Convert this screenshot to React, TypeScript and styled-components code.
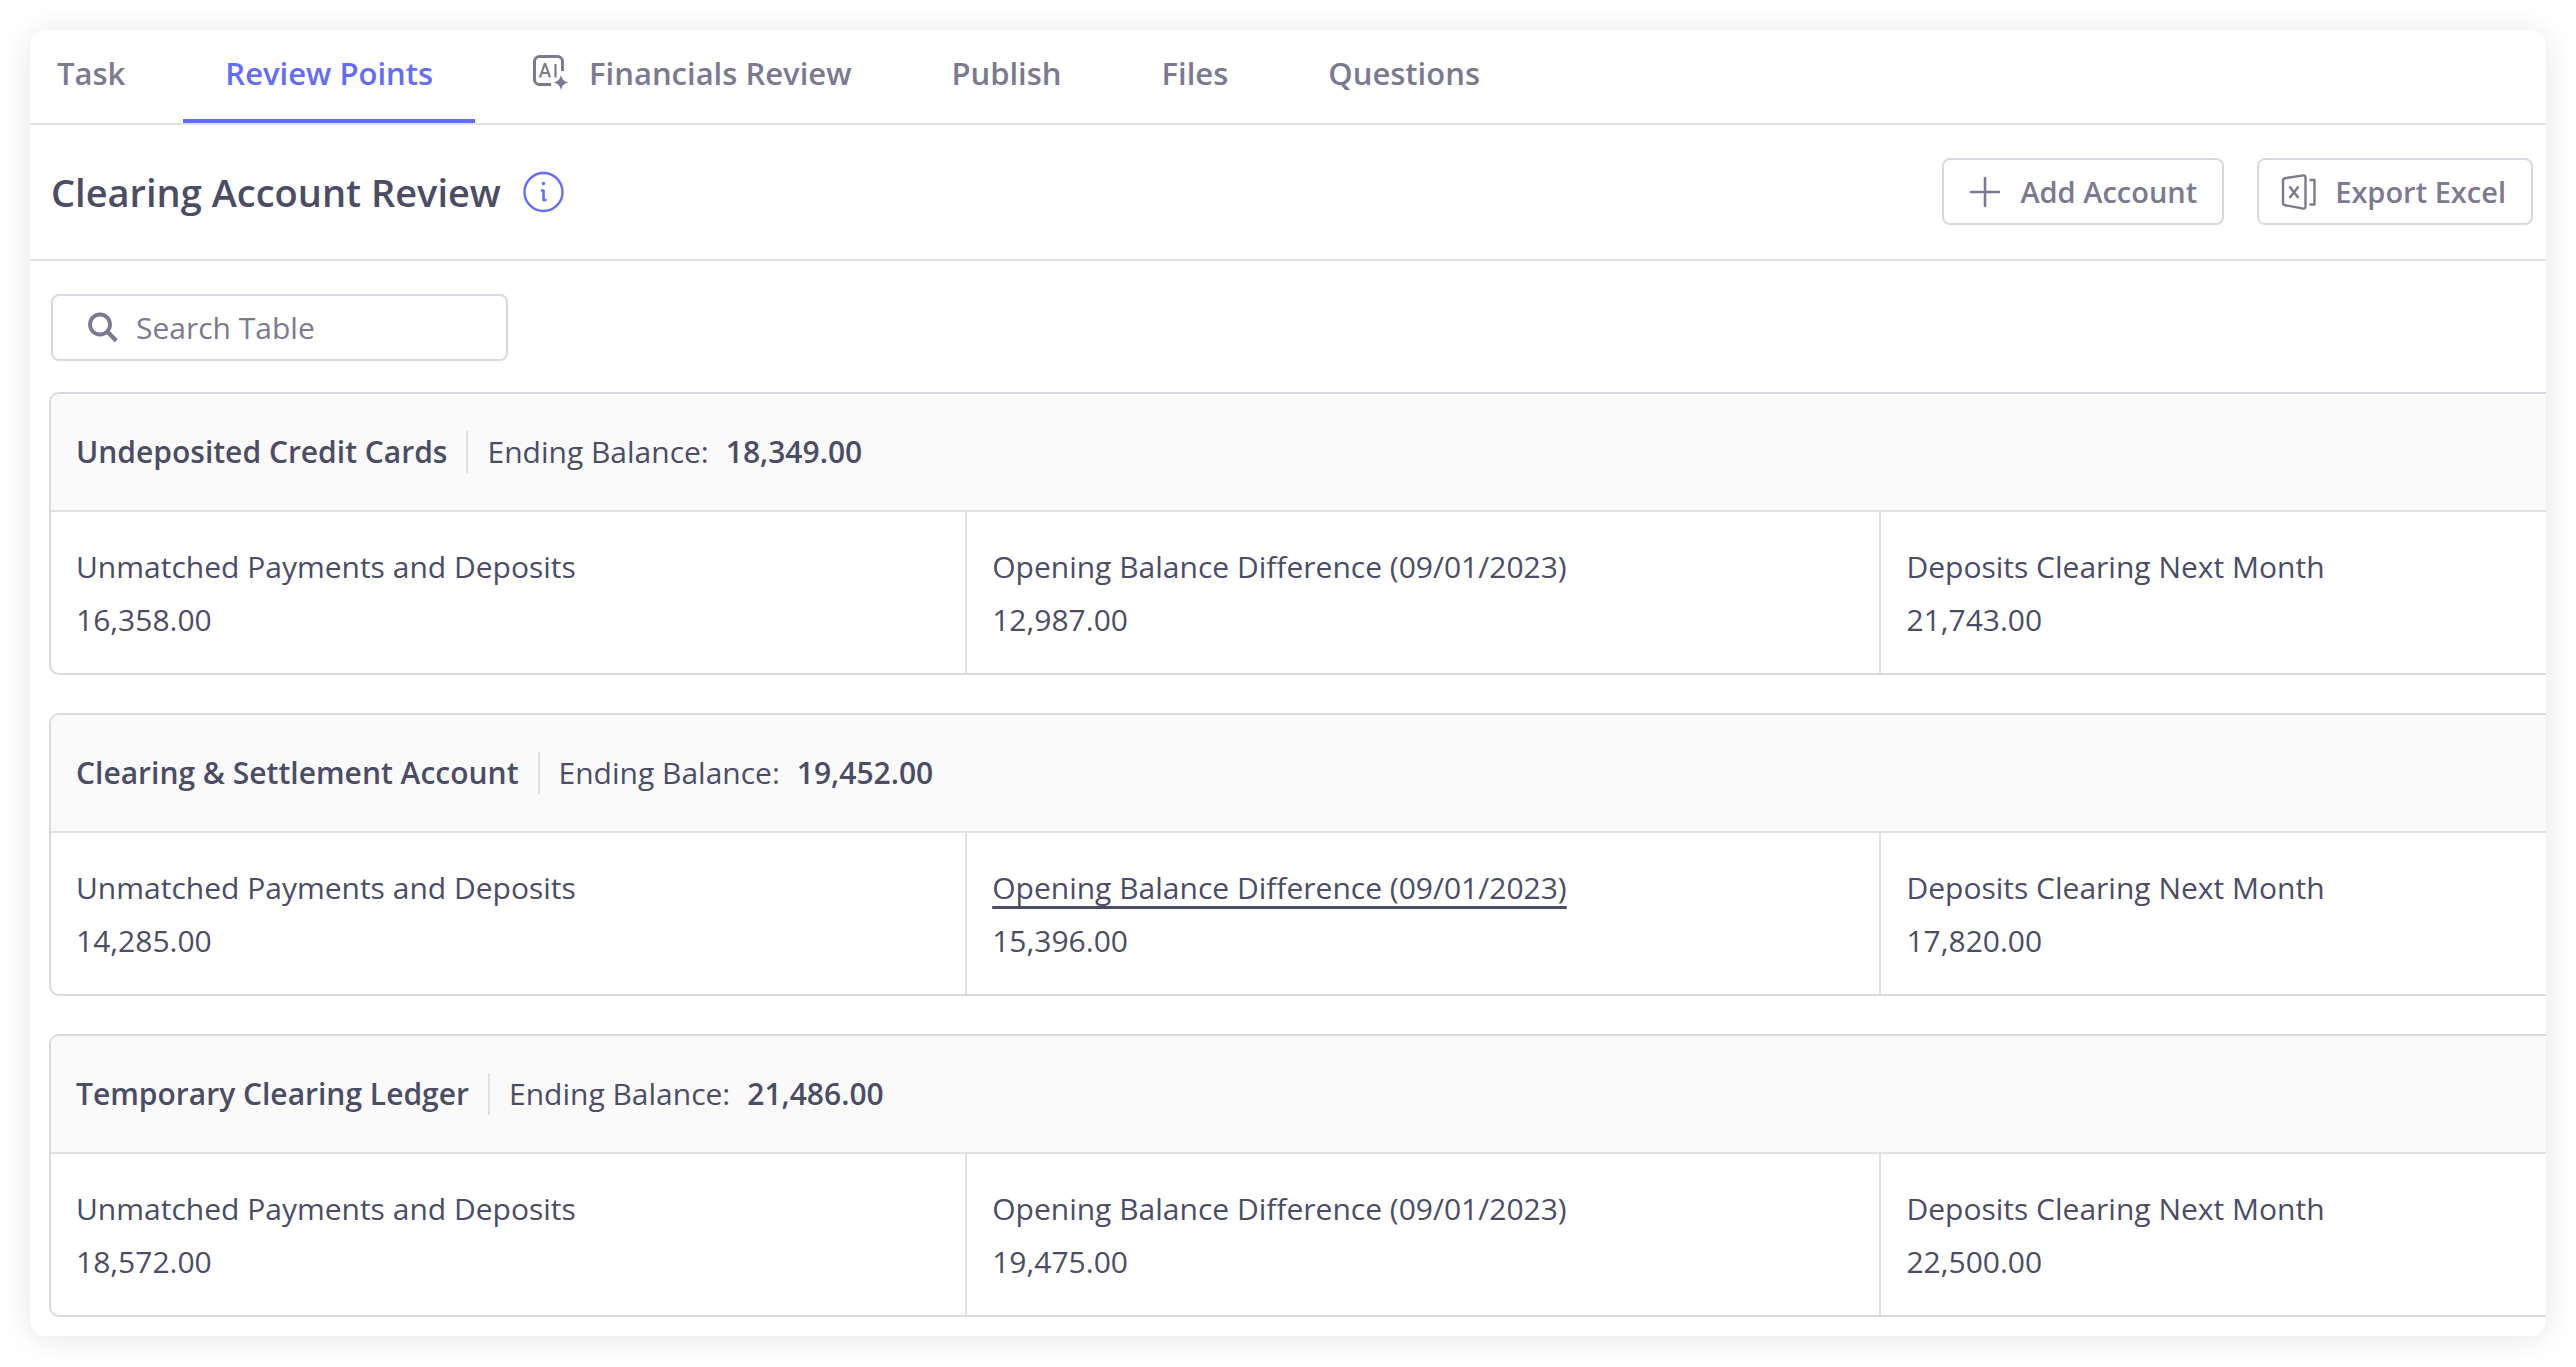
import React from 'react';
import styled, { createGlobalStyle } from 'styled-components';

const color = {
  ink: '#4b4d66',
  muted: '#7b7a90',
  accent: '#646cff',
  border: '#d9dae0',
  line: '#e0e1e4',
  header: '#fafafa',
};

const GlobalStyle = createGlobalStyle`
  *, *::before, *::after { box-sizing: border-box; }
  body {
    margin: 0;
    background: #fff;
    color: ${color.ink};
    font-family: "Open Sans", "Noto Sans", sans-serif;
    font-size: 30px;
  }
  button, input { font: inherit; color: inherit; }
`;

const Page = styled.div`
  padding: 30px;
`;

const Panel = styled.main`
  overflow: hidden;
  border-radius: 16px;
  background: #fff;
  box-shadow: 0 2px 32px rgba(0, 0, 0, 0.1);
`;

const Tabs = styled.nav`
  display: flex;
  gap: 16px;
  height: 95px;
  border-bottom: 2px solid ${color.line};
`;

const Tab = styled.button<{ $active?: boolean }>`
  display: flex;
  align-items: center;
  gap: 20px;
  padding: 0 42px 4px;
  border: 0;
  border-bottom: 4px solid ${p => (p.$active ? color.accent : 'transparent')};
  background: none;
  color: ${p => (p.$active ? color.accent : color.muted)};
  font-size: 31px;
  font-weight: 600;
  white-space: nowrap;
  cursor: pointer;

  &:first-child { padding-left: 27px; }
`;

const TitleBar = styled.header`
  display: flex;
  align-items: center;
  justify-content: space-between;
  padding: 33px 13px 34px 21px;
  border-bottom: 2px solid ${color.line};
`;

const TitleGroup = styled.div`
  display: flex;
  align-items: center;
  gap: 22px;
`;

const Title = styled.h1`
  margin: 0;
  font-size: 38px;
  line-height: 52px;
  font-weight: 600;
`;

const InfoButton = styled.button`
  display: flex;
  padding: 0;
  border: 0;
  background: none;
  color: ${color.accent};
  cursor: pointer;
`;

const Actions = styled.div`
  display: flex;
  gap: 33px;
`;

const ActionButton = styled.button`
  display: flex;
  align-items: center;
  gap: 16px;
  height: 67px;
  padding: 0 25px 0 22px;
  border: 2px solid ${color.border};
  border-radius: 8px;
  background: #fff;
  color: ${color.muted};
  font-size: 29px;
  font-weight: 600;
  white-space: nowrap;
  cursor: pointer;
`;

const Content = styled.section`
  padding: 33px 0 19px 19px;
`;

const SearchBox = styled.label`
  display: flex;
  align-items: center;
  gap: 18px;
  width: 457px;
  height: 67px;
  margin: 0 0 31px 2px;
  padding: 0 34px;
  border: 2px solid ${color.border};
  border-radius: 8px;
  color: ${color.muted};
`;

const SearchInput = styled.input`
  flex: 1;
  min-width: 0;
  padding: 0;
  border: 0;
  outline: 0;
  background: none;

  &::placeholder { color: ${color.muted}; opacity: 1; }
`;

const Accounts = styled.div`
  display: grid;
  gap: 38px;
  width: 110%;
`;

const Account = styled.article`
  overflow: hidden;
  border: 2px solid ${color.border};
  border-radius: 10px;
`;

const AccountHeader = styled.header`
  display: flex;
  align-items: center;
  height: 118px;
  padding: 0 25px;
  border-bottom: 2px solid ${color.line};
  background: ${color.header};
`;

const AccountName = styled.h2`
  margin: 0;
  padding-right: 19px;
  font-size: 30px;
  line-height: 42px;
  font-weight: 600;
  border-right: 2px solid ${color.line};
`;

const Balance = styled.p`
  display: flex;
  gap: 17px;
  margin: 0;
  padding-left: 19px;
  line-height: 42px;

  strong { font-weight: 600; }
`;

const Metrics = styled.dl`
  display: grid;
  grid-template-columns: repeat(3, 1fr);
  margin: 0;
`;

const Metric = styled.div`
  padding: 28px 25px 27px;
  line-height: 53px;

  & + & { border-left: 2px solid ${color.line}; }
`;

const MetricLabel = styled.dt``;

const MetricValue = styled.dd`
  margin: 0;
`;

const MetricLink = styled.a`
  color: inherit;
  text-decoration: underline;
  text-decoration-thickness: 3px;
  text-decoration-skip-ink: none;
  text-underline-offset: 7px;
`;

const AiIcon = () => (
  <svg width="36" height="36" viewBox="0 0 36 36" fill="none" aria-hidden="true">
    <path
      d="M18 29.5H6.5a5 5 0 0 1-5-5v-18a5 5 0 0 1 5-5h18a5 5 0 0 1 5 5V16"
      stroke="currentColor" strokeWidth="3"
    />
    <path d="M7 22.5l4.700-13.500h.6L17 22.500M8.600 18h6.800M22.500 9v13.500" stroke="currentColor" strokeWidth="2.200" />
    <path d="M28 20c1.200 4.600 2.800 6.300 7.500 7.500-4.700 1.200-6.300 2.900-7.500 7.500-1.200-4.600-2.800-6.300-7.500-7.500 4.700-1.200 6.300-2.900 7.500-7.500z" fill="currentColor" />
  </svg>
);

const InfoIcon = () => (
  <svg width="42" height="42" viewBox="0 0 42 42" fill="none" aria-hidden="true">
    <circle cx="20.500" cy="21" r="19" stroke="currentColor" strokeWidth="2.400" />
    <circle cx="20.500" cy="12.500" r="1.700" fill="currentColor" />
    <path d="M18 19.500h2.500v9.500h3" stroke="currentColor" strokeWidth="2.600" strokeLinejoin="round" />
  </svg>
);

const PlusIcon = () => (
  <svg width="38" height="38" viewBox="0 0 38 38" fill="none" aria-hidden="true">
    <path d="M19 5v28M5 19h28" stroke="currentColor" strokeWidth="2.600" strokeLinecap="round" />
  </svg>
);

const ExcelIcon = () => (
  <svg width="38" height="36" viewBox="0 0 38 36" fill="none" aria-hidden="true">
    <path
      d="M4 4.200 22.500 1.400a1.800 1.800 0 0 1 2 1.800v29.600a1.800 1.800 0 0 1-2 1.800L4 31.200a2.500 2.500 0 0 1-2-2.500V6.700a2.500 2.500 0 0 1 2-2.500z"
      stroke="currentColor" strokeWidth="2.400"
    />
    <path d="M8.500 12.500l9 11.500M17.500 12.500l-9 11.500" stroke="currentColor" strokeWidth="2.400" />
    <path d="M28.500 6h5v24.500h-5" stroke="currentColor" strokeWidth="2.400" strokeLinejoin="round" />
  </svg>
);

const SearchIcon = () => (
  <svg width="31" height="31" viewBox="0 0 31 31" fill="none" aria-hidden="true">
    <circle cx="13" cy="12.500" r="10" stroke="currentColor" strokeWidth="3.800" />
    <path d="M20.300 19.800l9 9" stroke="currentColor" strokeWidth="4.400" />
  </svg>
);

const tabs = [
  { label: 'Task' },
  { label: 'Review Points', active: true },
  { label: 'Financials Review', icon: <AiIcon /> },
  { label: 'Publish' },
  { label: 'Files' },
  { label: 'Questions' },
];

const metricLabels = [
  'Unmatched Payments and Deposits',
  'Opening Balance Difference (09/01/2023)',
  'Deposits Clearing Next Month',
];

const accounts = [
  { name: 'Undeposited Credit Cards', balance: '18,349.00', values: ['16,358.00', '12,987.00', '21,743.00'] },
  { name: 'Clearing & Settlement Account', balance: '19,452.00', values: ['14,285.00', '15,396.00', '17,820.00'], linked: 1 },
  { name: 'Temporary Clearing Ledger', balance: '21,486.00', values: ['18,572.00', '19,475.00', '22,500.00'] },
];

export default function App() {
  return (
    <Page>
      <GlobalStyle />
      <Panel>
        <Tabs>
          {tabs.map(tab => (
            <Tab key={tab.label} type="button" $active={tab.active} aria-current={tab.active ? 'page' : undefined}>
              {tab.icon}
              {tab.label}
            </Tab>
          ))}
        </Tabs>
        <TitleBar>
          <TitleGroup>
            <Title>Clearing Account Review</Title>
            <InfoButton type="button" aria-label="About this review"><InfoIcon /></InfoButton>
          </TitleGroup>
          <Actions>
            <ActionButton type="button"><PlusIcon />Add Account</ActionButton>
            <ActionButton type="button"><ExcelIcon />Export Excel</ActionButton>
          </Actions>
        </TitleBar>
        <Content>
          <SearchBox>
            <SearchIcon />
            <SearchInput type="text" placeholder="Search Table" aria-label="Search Table" />
          </SearchBox>
          <Accounts>
            {accounts.map(account => (
              <Account key={account.name}>
                <AccountHeader>
                  <AccountName>{account.name}</AccountName>
                  <Balance>Ending Balance: <strong>{account.balance}</strong></Balance>
                </AccountHeader>
                <Metrics>
                  {metricLabels.map((label, i) => (
                    <Metric key={label}>
                      <MetricLabel>
                        {account.linked === i ? <MetricLink href="#">{label}</MetricLink> : label}
                      </MetricLabel>
                      <MetricValue>{account.values[i]}</MetricValue>
                    </Metric>
                  ))}
                </Metrics>
              </Account>
            ))}
          </Accounts>
        </Content>
      </Panel>
    </Page>
  );
}
